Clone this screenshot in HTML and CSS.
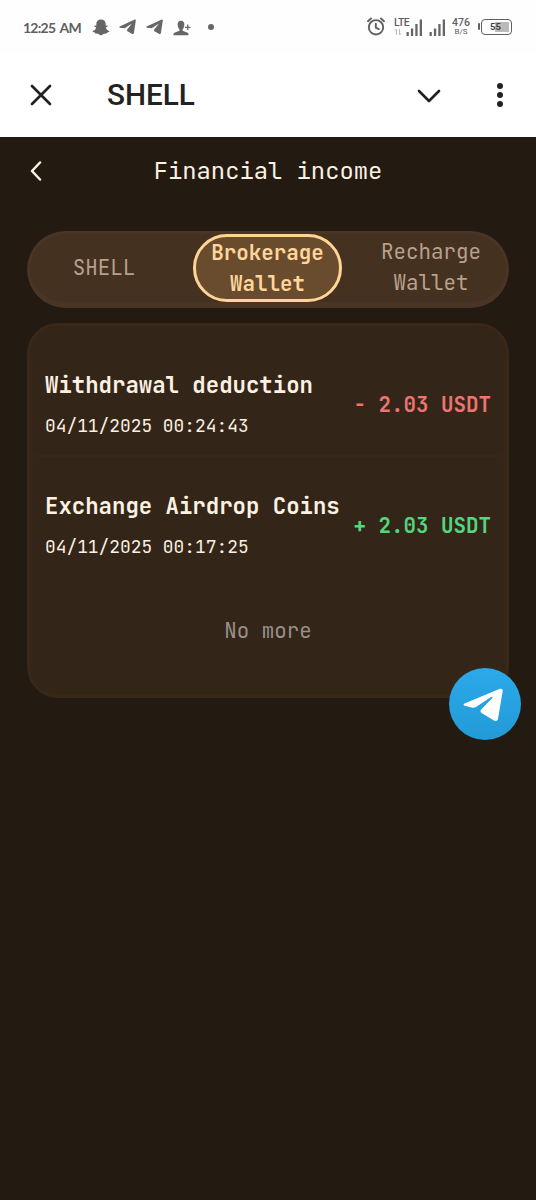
FILE: index.html
```html
<!DOCTYPE html>
<html lang="en">
<head>
<meta charset="utf-8">
<title>Financial income</title>
<link rel="stylesheet" href="styles.css">
</head>
<body>
<div class="statusbar">
  <span class="clock">12:25 AM</span>
  <svg class="snap" width="18" height="17" viewBox="0 0 18 17"><path d="M9 .5C12 .5 13.700 2.500 13.700 5v1.800l1.500-.3c.8.100.6.9 0 1.200l-1.400.8c.5 1.700 1.600 2.900 3.400 3.500.5.300 0 .9-.5 1.100l-1.500.5-.6 1-2.500.1L9 16.500 5.900 14.700l-2.500-.1-.6-1-1.500-.5c-.5-.2-1-.8-.5-1.100 1.800-.6 2.900-1.800 3.400-3.500L2.800 7.700c-.6-.3-.8-1.100 0-1.200l1.500.3V5C4.300 2.500 6 .5 9 .5Z"/></svg>
  <svg class="tg" width="17" height="16" viewBox="0 0 17 16"><path d="M.6 7.500 15.800.6q1.200-.3 1 1L14.900 14q-.3 1.600-1.600.9L8.500 12.300Q7.400 11.300 8.400 10.300L13 4.600 5.700 9.300 1 8.700Q-.3 8.200.6 7.500Z"/></svg>
  <svg class="tg" width="17" height="16" viewBox="0 0 17 16"><path d="M.6 7.500 15.800.6q1.200-.3 1 1L14.900 14q-.3 1.600-1.600.9L8.500 12.300Q7.400 11.300 8.400 10.300L13 4.600 5.700 9.300 1 8.700Q-.3 8.200.6 7.500Z"/></svg>
  <svg class="person" width="18" height="16" viewBox="0 0 18 16"><path d="M8 .8c2.500 0 3.500 2 3.300 4.200C11.200 7.300 10.400 8.500 9.600 9.300v1.400l4.500 1.700c1.200.5 1.500 1.500 1.500 2.800H.4c0-1.300.3-2.300 1.500-2.800l4.500-1.700V9.300C5.600 8.500 4.800 7.300 4.700 5 4.500 2.800 5.500.8 8 .8Z"/><path d="M12 7.300h5.500M14.750 4.500V10" stroke="#666" stroke-width="1.300"/></svg>
  <i class="dot"></i>
  <svg class="alarm" width="18" height="19" viewBox="0 0 18 19" fill="none" stroke="#606060" stroke-width="1.900" stroke-linecap="round"><circle cx="9" cy="10.300" r="7.200"/><path d="M8.800 6.700v4l3 1.400M1 4.200 4 1.500M17 4.200 14 1.500"/></svg>
  <span class="lte"><b>LTE</b><svg width="8" height="8" viewBox="0 0 8 8" fill="none" stroke="#bbb"><path d="M2.500 7V1L.8 3M5.500 1v6L7.200 5"/></svg></span>
  <svg class="bars first" width="17" height="17" viewBox="0 0 17 17"><path d="M.5 13h2.300v4H.5zM4.900 9.500h2.300V17H4.900zM9.300 5h2.300v12H9.300zM13.700.5H16V17h-2.300z"/></svg>
  <svg class="bars" width="17" height="17" viewBox="0 0 17 17"><path d="M.5 13h2.300v4H.5zM4.900 9.500h2.300V17H4.900zM9.300 5h2.300v12H9.300zM13.700.5H16V17h-2.300z"/></svg>
  <span class="speed"><b>476</b><small>B/S</small></span>
  <span class="battery"><span>55</span></span>
</div>
<div class="appbar">
  <svg class="close" width="22" height="22" viewBox="0 0 22 22"><path d="m2 2 18 18M20 2 2 20"/></svg>
  <span class="apptitle">SHELL</span>
  <svg class="down" width="24" height="14" viewBox="0 0 24 14"><path d="m2 2 10 10L22 2"/></svg>
  <span class="more"><i></i><i></i><i></i></span>
</div>
<main>
  <header class="pagehead">
    <svg width="12" height="20" viewBox="0 0 12 20"><path d="M10 1.500 2 10l8 8.500"/></svg>
    <h1>Financial income</h1>
  </header>
  <nav class="tabs">
    <div class="tab">SHELL</div>
    <div class="tab active">Brokerage<br>Wallet</div>
    <div class="tab">Recharge<br>Wallet</div>
  </nav>
  <section class="card">
    <article class="entry">
      <div><h2>Withdrawal deduction</h2><time>04/11/2025 00:24:43</time></div>
      <strong class="amount minus">- 2.03 USDT</strong>
    </article>
    <article class="entry">
      <div><h2>Exchange Airdrop Coins</h2><time>04/11/2025 00:17:25</time></div>
      <strong class="amount plus">+ 2.03 USDT</strong>
    </article>
    <p class="end">No more</p>
    <div class="chat"><svg width="40" height="34" viewBox="0 0 40 34"><path d="M1.500 15.500 37 .8Q40 0 39.700 3L35 31Q34 34 31 32.500L18.500 25Q16.500 23.200 18.200 21.500L29.500 9.800Q29.800 8.200 28 9L13 19Q11 20.300 8.500 19.500L1.500 17.700Q-.5 16.600 1.500 15.500Z"/></svg></div>
  </section>
</main>
</body>
</html>
```
FILE: styles.css
```css
* { box-sizing: border-box; }
body { margin: 0; width: 536px; height: 1200px; overflow: hidden; background: #231a12; display: flex; flex-direction: column; }
svg, i { display: block; flex: none; }

.statusbar { height: 54px; background: #fefefe; display: flex; align-items: center; padding-left: 23px; color: #606060; fill: #666; font-family: Roboto, sans-serif; }
.clock { width: 69px; font: 700 14px Lato, sans-serif; white-space: nowrap; letter-spacing: -.75px; word-spacing: 2px; }
.tg { margin-left: 9px; }
.tg + .tg { margin-left: 10px; }
.person { margin-left: 10px; margin-top: 2px; }
.dot { width: 6px; height: 6px; border-radius: 50%; background: #666; margin-left: 17px; }
.alarm { margin-left: 153px; margin-top: -2px; }
.lte { width: 17px; height: 18px; margin-left: 9px; display: flex; flex-direction: column; }
.lte b { font: 500 10.500px/10px Roboto, sans-serif; letter-spacing: -.5px; }
.bars.first { margin-left: -5px; }
.bars { margin-left: 6px; }
.speed { width: 20px; margin-left: 5px; display: flex; flex-direction: column; align-items: center; gap: 1px; }
.speed b { font: 500 10.500px/9px Roboto, sans-serif; }
.speed small { font: 8px/8px Roboto, sans-serif; }
.battery { margin-left: 10px; width: 31px; height: 16px; border: 1.500px solid #606060; border-radius: 4px; padding: 2px; position: relative; }
.battery::before { content: ""; position: absolute; left: -4px; top: 3px; width: 2px; height: 7px; background: #606060; border-radius: 1px; }
.battery span { display: block; height: 100%; background: linear-gradient(90deg, transparent 45%, #bbb 45%); font: 700 9.500px/10px Roboto, sans-serif; color: #444; padding-left: 6px; }

.appbar { height: 83px; background: #fff; display: flex; align-items: center; padding-left: 30px; fill: none; stroke: #222; stroke-width: 2.700; stroke-linecap: round; stroke-linejoin: round; }
.close { margin-top: -1px; }
.apptitle { margin-left: 55px; width: 255px; font: 500 29.700px/40px Roboto, sans-serif; color: #222; padding-bottom: 2px; }
.down { margin-left: 55px; margin-top: 1px; }
.more { display: flex; flex-direction: column; gap: 3px; margin-left: 56px; margin-top: -1px; }
.more i { width: 6px; height: 6px; border-radius: 50%; background: #222; }

main { font-family: "JetBrains Mono", "DejaVu Sans Mono", monospace; padding: 0 27px; color: #fdf1e2; flex: 1; }
.pagehead { height: 68px; display: grid; grid-template-columns: 12px 1fr 12px; align-items: center; padding: 0 3px; }
.pagehead svg { fill: none; stroke: #fdf1e2; stroke-width: 2.500; stroke-linecap: round; stroke-linejoin: round; }
h1 { margin: 0; text-align: center; font-size: 23.820px; font-weight: 400; line-height: 32px; }

.tabs { margin-top: 26px; height: 77px; border: 3px solid #493425; border-bottom-width: 6px; border-radius: 39px; background: #443120; display: grid; grid-template-columns: 163px 149px 164px; align-items: center; font-size: 20.840px; line-height: 31px; text-align: center; color: #b9a08c; }
.tab:first-child { padding: 0 15px 2px 0; }
.tab:last-child { padding: 0 0 2px 14px; }
.tab.active { height: 68px; border: 3px solid #ffd597; border-radius: 34px; background: #694c2e; color: #ffd59b; font-weight: 700; display: flex; justify-content: center; align-items: center; padding-bottom: 1px; }

.card { position: relative; margin-top: 15px; height: 375px; border: 3px solid #392818; border-radius: 31px; background: #342519; padding: 9px 3px; }
.entry { height: 121px; display: flex; justify-content: space-between; align-items: center; padding: 15px 12px 0; }
.entry:first-child { border-bottom: 2px solid #392819; border-radius: 0 0 6px 6px; height: 122px; padding-top: 18px; }
h2 { margin: 0; font-size: 22.330px; line-height: 34px; font-weight: 700; white-space: nowrap; }
time { display: block; margin-top: 10px; font-size: 17.870px; line-height: 28px; }
.amount { margin-top: 1px; font-size: 20.840px; line-height: 30px; font-weight: 700; white-space: nowrap; }
.minus { color: #ee7471; }
.plus { color: #52d77f; margin-top: 2px; }
.end { margin: 38px 0 0; text-align: center; font-size: 20.840px; line-height: 30px; color: #98918b; }
.chat { position: absolute; right: -15px; bottom: -45px; width: 72px; height: 72px; border-radius: 50%; background: linear-gradient(#2ba9ea, #239ad7); display: flex; align-items: center; justify-content: center; fill: #fff; padding-right: 4px; padding-top: 2px; }
```
